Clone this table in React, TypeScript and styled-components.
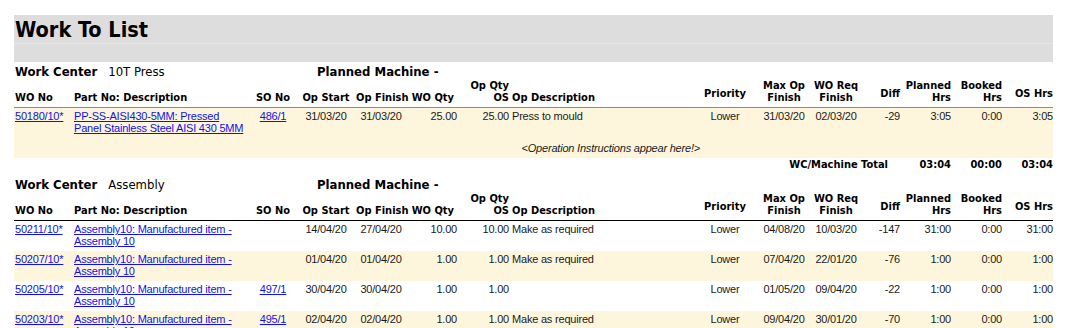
import styled, { createGlobalStyle } from 'styled-components';

const BOLD_FONT = '"DejaVu Sans Condensed", "DejaVu Sans", sans-serif';

const GlobalStyle = createGlobalStyle`
  body {
    margin: 0;
    background: #ffffff;
    font-family: "Liberation Sans", Arial, sans-serif;
    font-size: 11px;
    letter-spacing: -0.2px;
    color: #1a1a1a;
  }
`;

// column tracks shared by the header, the rows and the totals line
const COLUMNS = '58px 178px 46px 60px 50px 51px 52px 191px 58px 52px 52px 38px 51px 51px 51px';

type Align = 'left' | 'center' | 'right';
type VAlign = 'middle' | 'bottom';

interface WorkOrder {
  wo: string;
  part: string;
  so?: string;
  opStart: string;
  opFinish: string;
  woQty: string;
  opQty: string;
  opDesc?: string;
  priority: string;
  maxOpFinish: string;
  woReqFinish: string;
  diff: string;
  planned: string;
  booked: string;
  osHrs: string;
  instructions?: string;
}

interface WorkCenter {
  name: string;
  rule: 'grey' | 'black';
  firstShaded: boolean;
  orders: WorkOrder[];
  totals?: { planned: string; booked: string; os: string };
}

const centers: WorkCenter[] = [
  {
    name: '10T Press',
    rule: 'grey',
    firstShaded: true,
    orders: [
      {
        wo: '50180/10*',
        part: 'PP-SS-AISI430-5MM: Pressed Panel Stainless Steel AISI 430 5MM',
        so: '486/1',
        opStart: '31/03/20',
        opFinish: '31/03/20',
        woQty: '25.00',
        opQty: '25.00',
        opDesc: 'Press to mould',
        priority: 'Lower',
        maxOpFinish: '31/03/20',
        woReqFinish: '02/03/20',
        diff: '-29',
        planned: '3:05',
        booked: '0:00',
        osHrs: '3:05',
        instructions: '<Operation Instructions appear here!>',
      },
    ],
    totals: { planned: '03:04', booked: '00:00', os: '03:04' },
  },
  {
    name: 'Assembly',
    rule: 'black',
    firstShaded: false,
    orders: [
      {
        wo: '50211/10*',
        part: 'Assembly10: Manufactured item - Assembly 10',
        opStart: '14/04/20',
        opFinish: '27/04/20',
        woQty: '10.00',
        opQty: '10.00',
        opDesc: 'Make as required',
        priority: 'Lower',
        maxOpFinish: '04/08/20',
        woReqFinish: '10/03/20',
        diff: '-147',
        planned: '31:00',
        booked: '0:00',
        osHrs: '31:00',
      },
      {
        wo: '50207/10*',
        part: 'Assembly10: Manufactured item - Assembly 10',
        opStart: '01/04/20',
        opFinish: '01/04/20',
        woQty: '1.00',
        opQty: '1.00',
        opDesc: 'Make as required',
        priority: 'Lower',
        maxOpFinish: '07/04/20',
        woReqFinish: '22/01/20',
        diff: '-76',
        planned: '1:00',
        booked: '0:00',
        osHrs: '1:00',
      },
      {
        wo: '50205/10*',
        part: 'Assembly10: Manufactured item - Assembly 10',
        so: '497/1',
        opStart: '30/04/20',
        opFinish: '30/04/20',
        woQty: '1.00',
        opQty: '1.00',
        priority: 'Lower',
        maxOpFinish: '01/05/20',
        woReqFinish: '09/04/20',
        diff: '-22',
        planned: '1:00',
        booked: '0:00',
        osHrs: '1:00',
      },
      {
        wo: '50203/10*',
        part: 'Assembly10: Manufactured item - Assembly 10',
        so: '495/1',
        opStart: '02/04/20',
        opFinish: '02/04/20',
        woQty: '1.00',
        opQty: '1.00',
        opDesc: 'Make as required',
        priority: 'Lower',
        maxOpFinish: '09/04/20',
        woReqFinish: '30/01/20',
        diff: '-70',
        planned: '1:00',
        booked: '0:00',
        osHrs: '1:00',
      },
    ],
  },
];

const headers: { lines: string[]; align: Align; v: VAlign; padL?: number; padR?: number }[] = [
  { lines: ['WO No'], align: 'left', v: 'bottom', padL: 1 },
  { lines: ['Part No: Description'], align: 'left', v: 'bottom', padL: 2 },
  { lines: ['SO No'], align: 'center', v: 'bottom' },
  { lines: ['Op Start'], align: 'center', v: 'bottom' },
  { lines: ['Op Finish'], align: 'center', v: 'bottom' },
  { lines: ['WO Qty'], align: 'right', v: 'bottom', padR: 3 },
  { lines: ['Op Qty', 'OS'], align: 'right', v: 'bottom' },
  { lines: ['Op Description'], align: 'left', v: 'bottom', padL: 3 },
  { lines: ['Priority'], align: 'center', v: 'middle', padR: 8 },
  { lines: ['Max Op', 'Finish'], align: 'center', v: 'bottom' },
  { lines: ['WO Req', 'Finish'], align: 'center', v: 'bottom' },
  { lines: ['Diff'], align: 'right', v: 'middle' },
  { lines: ['Planned', 'Hrs'], align: 'right', v: 'bottom' },
  { lines: ['Booked', 'Hrs'], align: 'right', v: 'bottom' },
  { lines: ['OS Hrs'], align: 'right', v: 'middle' },
];

const Page = styled.div`
  width: 1039px;
  padding: 15px 0 0 14px;
`;

const TitleBar = styled.header`
  height: 47px;
  background: #dddddd;
  display: flex;
  flex-direction: column;
`;

const TitleText = styled.h1`
  margin: 0;
  height: 28px;
  padding-left: 1px;
  border-bottom: 1px solid #e6e6e6;
  font-family: ${BOLD_FONT};
  font-size: 21.5px;
  font-weight: 700;
  letter-spacing: 0;
  line-height: 29px;
  color: #000000;
`;

const CenterBlock = styled.section`
  display: flex;
  flex-direction: column;
`;

const CenterHead = styled.div`
  display: flex;
  align-items: baseline;
  padding-top: 2px;
  height: 16px;
  line-height: 16px;
  font-size: 13px;
  letter-spacing: 0;
  color: #000000;
`;

const CenterName = styled.div`
  width: 303px;
  padding-left: 1px;
  box-sizing: border-box;
  font-family: ${BOLD_FONT};

  b {
    margin-right: 11px;
  }
`;

const MachineLabel = styled.b`
  font-family: ${BOLD_FONT};
  font-weight: 700;
`;

const Grid = styled.div`
  display: grid;
  grid-template-columns: ${COLUMNS};
`;

const HeaderRow = styled(Grid)<{ $rule: 'grey' | 'black' }>`
  height: 27px;
  box-sizing: content-box;
  border-bottom: 1px solid ${({ $rule }) => ($rule === 'grey' ? '#8a8a8a' : '#000000')};
  font-family: ${BOLD_FONT};
  font-weight: 700;
  letter-spacing: 0;
  color: #000000;
  line-height: 12px;
`;

const HeaderCell = styled.div<{ $align: Align; $v: VAlign; $padL?: number; $padR?: number }>`
  display: flex;
  flex-direction: column;
  justify-content: ${({ $v }) => ($v === 'bottom' ? 'flex-end' : 'center')};
  padding: 0 ${({ $padR = 0 }) => $padR}px ${({ $v }) => ($v === 'bottom' ? 3 : 0)}px
    ${({ $padL = 0 }) => $padL}px;
  text-align: ${({ $align }) => $align};
  white-space: nowrap;
`;

const OrderBlock = styled.div<{ $shaded: boolean }>`
  background: ${({ $shaded }) => ($shaded ? '#fef6dc' : 'transparent')};
`;

const OrderRow = styled(Grid)`
  padding: 2px 0 4px;
  line-height: 12px;
  min-height: 24px;
`;

const Cell = styled.div<{ $align?: Align; $padL?: number; $padR?: number }>`
  text-align: ${({ $align = 'left' }) => $align};
  padding: 0 ${({ $padR = 0 }) => $padR}px 0 ${({ $padL = 0 }) => $padL}px;
  white-space: nowrap;
`;

const Link = styled.a`
  color: #1010f0;
  text-decoration: underline;
  cursor: pointer;
`;

const PartCell = styled.div`
  padding: 0 4px 0 2px;
  white-space: normal;
`;

const Instructions = styled.div`
  width: 686px;
  padding: 4px 0;
  line-height: 12px;
  text-align: right;
  font-style: italic;
  color: #1a1a1a;
`;

const TotalRow = styled(Grid)`
  height: 14px;
  padding-bottom: 3px;
  line-height: 14px;
  font-family: ${BOLD_FONT};
  font-weight: 700;
  letter-spacing: 0;
  color: #000000;
`;

const TotalLabel = styled.div`
  grid-column: 9 / 13;
  text-align: right;
  padding-right: 12px;
`;

function Order({ order, shaded }: { order: WorkOrder; shaded: boolean }) {
  return (
    <OrderBlock $shaded={shaded}>
      <OrderRow>
        <Cell $padL={1}>
          <Link>{order.wo}</Link>
        </Cell>
        <PartCell>
          <Link>{order.part}</Link>
        </PartCell>
        <Cell $align="center">{order.so ? <Link>{order.so}</Link> : null}</Cell>
        <Cell $align="center">{order.opStart}</Cell>
        <Cell $align="center">{order.opFinish}</Cell>
        <Cell $align="right">{order.woQty}</Cell>
        <Cell $align="right">{order.opQty}</Cell>
        <Cell $padL={3}>{order.opDesc}</Cell>
        <Cell $align="center" $padR={8}>
          {order.priority}
        </Cell>
        <Cell $align="center">{order.maxOpFinish}</Cell>
        <Cell $align="center">{order.woReqFinish}</Cell>
        <Cell $align="right">{order.diff}</Cell>
        <Cell $align="right">{order.planned}</Cell>
        <Cell $align="right">{order.booked}</Cell>
        <Cell $align="right">{order.osHrs}</Cell>
      </OrderRow>
      {order.instructions ? <Instructions>{order.instructions}</Instructions> : null}
    </OrderBlock>
  );
}

function Center({ center }: { center: WorkCenter }) {
  return (
    <CenterBlock>
      <CenterHead>
        <CenterName>
          <b>Work Center</b>
          {center.name}
        </CenterName>
        <MachineLabel>Planned Machine -</MachineLabel>
      </CenterHead>
      <HeaderRow $rule={center.rule}>
        {headers.map((h) => (
          <HeaderCell key={h.lines.join(' ')} $align={h.align} $v={h.v} $padL={h.padL} $padR={h.padR}>
            {h.lines.map((line) => (
              <span key={line}>{line}</span>
            ))}
          </HeaderCell>
        ))}
      </HeaderRow>
      {center.orders.map((order, i) => (
        <Order key={order.wo} order={order} shaded={(i % 2 === 0) === center.firstShaded} />
      ))}
      {center.totals ? (
        <TotalRow>
          <TotalLabel>WC/Machine Total</TotalLabel>
          <Cell $align="right">{center.totals.planned}</Cell>
          <Cell $align="right">{center.totals.booked}</Cell>
          <Cell $align="right">{center.totals.os}</Cell>
        </TotalRow>
      ) : null}
    </CenterBlock>
  );
}

export default function App() {
  return (
    <>
      <GlobalStyle />
      <Page>
        <TitleBar>
          <TitleText>Work To List</TitleText>
        </TitleBar>
        {centers.map((c) => (
          <Center key={c.name} center={c} />
        ))}
      </Page>
    </>
  );
}
